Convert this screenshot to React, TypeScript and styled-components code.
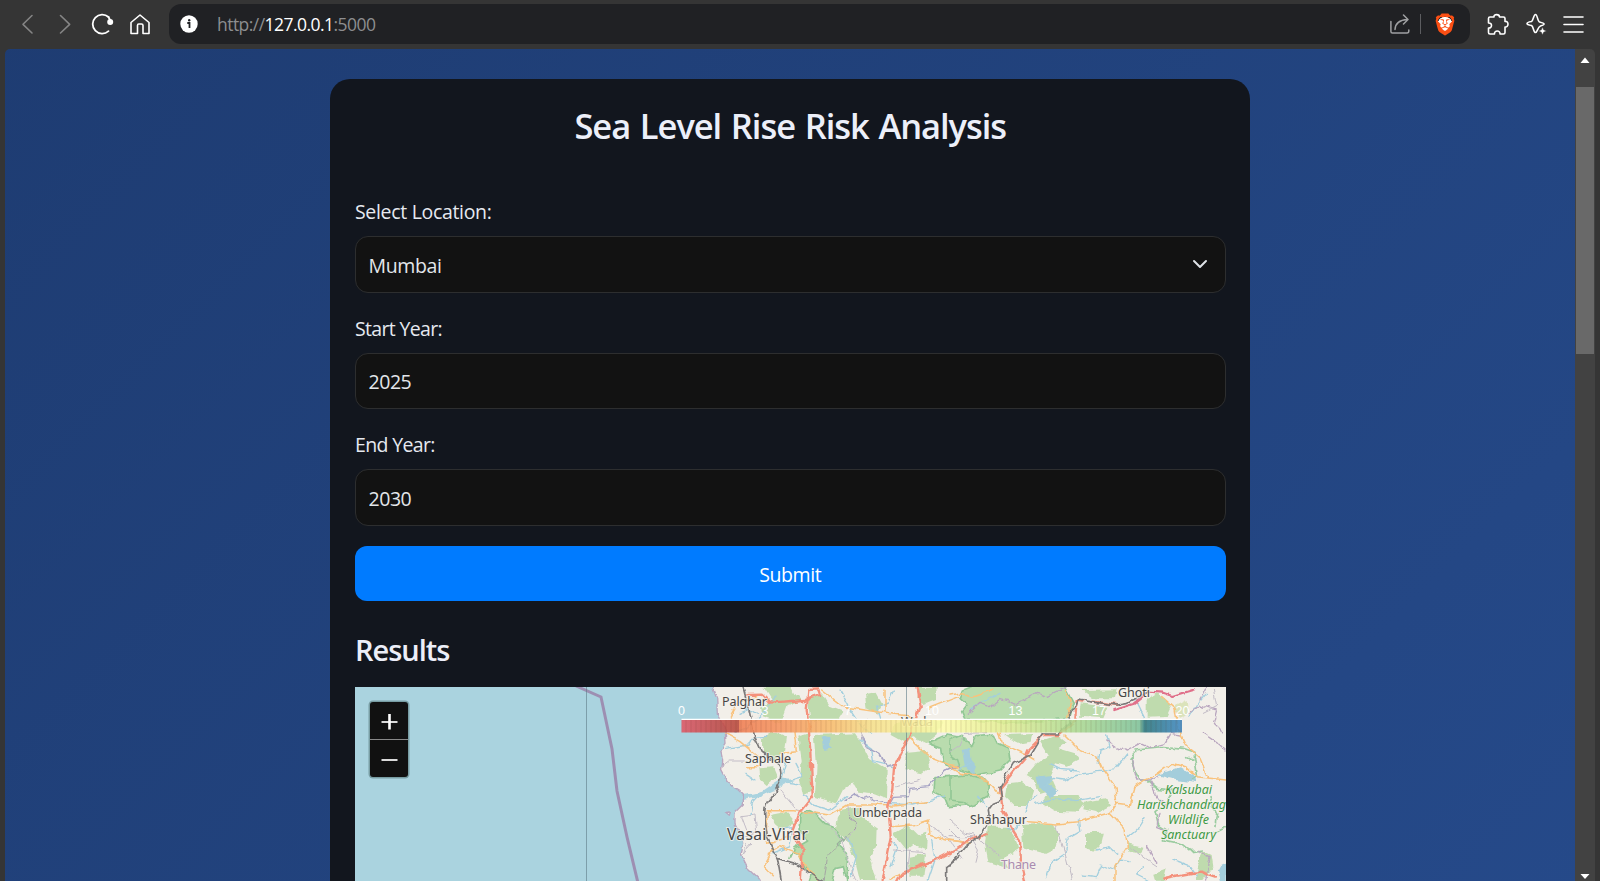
import React, { useState } from 'react';
import styled, { createGlobalStyle } from 'styled-components';
import { SiBrave } from 'react-icons/si';

const GlobalStyle = createGlobalStyle`
  *, *::before, *::after { box-sizing: border-box; }
  body {
    margin: 0;
    background: #353535;
    font-family: 'Open Sans', 'Noto Sans', sans-serif;
    color: #eceef8;
    overflow: hidden;
  }
`;

const Browser = styled.div`
  display: flex;
  flex-direction: column;
  width: 1600px;
  height: 881px;
  background: #353535;
  overflow: hidden;
`;

const Toolbar = styled.header`
  display: flex;
  align-items: center;
  flex: 0 0 49px;
  padding: 4px 15px 5px 8px;
`;

const ToolIcon = styled.svg<{ $dim?: boolean }>`
  flex: 0 0 38px;
  width: 38px;
  height: 40px;
  fill: none;
  stroke: ${(p) => (p.$dim ? '#858585' : '#fff')};
  stroke-width: 1.6;
  stroke-linecap: round;
  stroke-linejoin: round;
`;

const AddressBar = styled.div`
  display: flex;
  align-items: center;
  flex: 0 0 1301px;
  height: 40px;
  margin-left: 9px;
  margin-right: 9px;
  padding: 0 14px 0 11px;
  border-radius: 12px;
  background: #202124;
`;

const Url = styled.span`
  flex: 1;
  margin-left: 19px;
  font-size: 17.5px;
  line-height: 38px;
  letter-spacing: -0.54px;
  color: #8d8e90;
  b { font-weight: 450; color: #fff; }
`;

const BarDivider = styled.span`
  width: 1px;
  height: 20px;
  margin: 0 13px 0 10px;
  background: #5c5d60;
`;

const Shield = styled(SiBrave)`
  width: 22px;
  height: 23px;
  color: #fb4f14;
  background: radial-gradient(circle at 50% 48%, #fff 0 7px, transparent 7.5px);
`;

const Viewport = styled.div`
  display: flex;
  flex: 1;
  min-height: 0;
  margin: 0 5px;
  border-radius: 5px 5px 0 0;
  overflow: hidden;
`;

const Page = styled.main`
  display: flex;
  justify-content: center;
  align-items: flex-start;
  width: 1570px;
  padding-top: 30px;
  background: linear-gradient(135deg, #1e3c72, #2a5298) 0 -53px / 1570px 2470px;
`;

const Scrollbar = styled.div`
  display: flex;
  flex-direction: column;
  align-items: center;
  flex: 1;
  background: #424242;
`;

const Thumb = styled.div`
  width: 18px;
  height: 267px;
  margin-bottom: auto;
  background: #696969;
`;

const ScrollArrow = styled.svg<{ $h: number }>`
  width: 20px;
  height: ${(p) => p.$h}px;
  fill: #fff;
`;

const Card = styled.section`
  width: 920px;
  height: 830px;
  padding: 25px 24.5px 0 25px;
  border-radius: 20px;
  background: #12161e;
`;

const Title = styled.h1`
  margin: 0;
  height: 92px;
  font-size: 34.5px;
  font-weight: 620;
  line-height: 44px;
  letter-spacing: -1.05px;
  word-spacing: 1.8px;
  text-align: center;
  color: #eceff9;
`;

const Field = styled.div`
  display: flex;
  flex-direction: column;
  gap: 8px;
  margin-bottom: 20px;
`;

const Label = styled.label<{ $spacing?: number }>`
  height: 32px;
  font-size: 19.5px;
  font-weight: 440;
  line-height: 32px;
  letter-spacing: ${(p) => p.$spacing ?? -0.65}px;
  color: #e6e9f0;
`;

const Control = styled.div`
  display: flex;
  align-items: center;
  height: 56.5px;
  padding: 0 17px 0 12.5px;
  border: 1px solid #2d2e2f;
  border-radius: 13px;
  background: #121212;
`;

const Input = styled.input`
  flex: 1;
  padding: 2px 0 0;
  border: 0;
  outline: 0;
  background: transparent;
  font-family: inherit;
  font-size: 19.5px;
  font-weight: 440;
  letter-spacing: -0.45px;
  color: #e3e6ea;
`;

const Select = styled.select`
  flex: 1;
  padding: 2px 0 0;
  border: 0;
  outline: 0;
  appearance: none;
  background: transparent;
  font-family: inherit;
  font-size: 19.5px;
  font-weight: 440;
  letter-spacing: -0.35px;
  color: #e3e6ea;
`;

const Chevron = styled.svg`
  width: 16px;
  height: 16px;
  fill: none;
  stroke: #dee2e6;
  stroke-width: 2;
  stroke-linecap: round;
  stroke-linejoin: round;
`;

const SubmitButton = styled.button`
  display: block;
  width: 100%;
  height: 55px;
  margin: 0 0 28px;
  padding: 2px 0 0;
  border: 0;
  border-radius: 12px;
  background: #007bff;
  font-family: inherit;
  font-size: 19.5px;
  font-weight: 440;
  letter-spacing: -0.4px;
  color: #fff;
`;

const Subtitle = styled.h2`
  margin: 0 0 16.5px;
  font-size: 29px;
  font-weight: 620;
  line-height: 42px;
  letter-spacing: -1px;
  color: #eceef8;
`;

const MapFrame = styled.div`
  position: relative;
  height: 194px;
  overflow: hidden;
`;

const MapCanvas = styled.svg`
  display: block;
  width: 871px;
  height: 194px;
  font-family: 'Noto Sans', sans-serif;
`;

const ZoomControl = styled.div`
  position: absolute;
  left: 15px;
  top: 15px;
  width: 38px;
  border-radius: 3px;
  background: #111;
  box-shadow: 0 0 0 1.5px rgba(60, 90, 90, 0.45);
`;

const ZoomButton = styled.div<{ $first?: boolean }>`
  height: ${(p) => (p.$first ? 38 : 37)}px;
  border-bottom: ${(p) => (p.$first ? '1px solid #888' : '0')};
  svg { display: block; width: 38px; height: 37px; stroke: #fff; }
`;

const Road = styled.path<{ $c?: string; $w?: number }>`
  fill: none;
  stroke: ${(p) => p.$c ?? '#f9c27c'};
  stroke-width: ${(p) => p.$w ?? 4.5}px;
  stroke-linejoin: round;
  stroke-linecap: round;
`;

const Wood = styled.path`
  fill: #bfdbae;
`;

const Park = styled.path`
  fill: #b9dcae;
  stroke: #92c795;
  stroke-width: 5px;
  stroke-linejoin: round;
`;

const Place = styled.text<{ $c?: string }>`
  fill: ${(p) => p.$c ?? '#454545'};
  stroke: #f5f2ec;
  stroke-width: 2px;
  stroke-opacity: .8;
  paint-order: stroke;
  stroke-linejoin: round;
`;

const Tick = styled.text`
  fill: #fff;
  font-family: 'Liberation Sans', sans-serif;
  font-size: 12.5px;
  text-anchor: middle;
`;

const LAND = '#f2efe9';
const RED = '#f4917c';
const WATER = '#a3cfde';
const RAIL = '#7c7a7a';
const BORDER = '#b9a6bf';

function WestMap() {
  return (
    <g transform="translate(680 680) scale(.333333)">
      <path
        d="M95 15L110 55 112 100 135 150 138 190 122 213 128 240 125 272 140 300 155 318 175 330 190 345V375L165 400V430L185 470 188 490 180 520 200 560 235 593 250 615H860V15Z"
        fill={LAND}
      />
      <path d="M134 397L148 396 145 406Z" fill={LAND} />
      <Wood d="M250 20L330 18 345 45 370 60 320 75 300 130 245 112 240 80 275 60ZM385 60L425 40 450 80 490 95 475 120 390 120ZM555 45L590 38 607 70 590 100 560 85ZM720 20H770L768 60 730 75 712 50ZM640 130L710 120 790 120 770 165 740 190 700 170 680 190 635 165ZM245 180L280 155 318 170 312 215 285 240 248 215ZM355 170L388 160 392 235 400 330 370 345 360 300 365 240ZM405 165L525 160 545 190 570 240 620 270 618 355 580 340 535 335 520 310 490 330 470 370 405 350 410 250ZM235 265L280 262 292 290 260 315 238 295ZM270 405L320 395 345 425 310 450 285 430ZM480 390L535 380 545 410 590 440 588 500 570 530 590 600H540L525 540 500 480 465 450ZM640 460L685 435 715 465 742 458 738 510 700 495 680 510ZM690 530L738 520 730 590H685ZM680 215L740 210 750 260 725 280 670 270Z" />
      <path d="M425 170L448 175 452 205 430 210ZM800 228L825 220 830 245 805 250Z" fill="#a3cddb" />
      <Park d="M362 425C360 390 385 385 400 398L432 430 465 440 490 480 475 495 502 520V610L490 560 465 565 455 610H385L395 580 370 560 360 525 340 515 330 535 345 500 380 480 360 455Z" />
      <Park d="M860 175L800 165 745 190 785 205 790 245 810 262 860 262M860 285L800 290 765 290 762 340 795 355 805 380 860 375" />
      <Road $c={WATER} $w={4} d="M165 155C190 165 240 110 260 90L285 45M140 205L205 195 215 175 260 172M195 352L240 348 310 308 362 315M195 352L300 320 320 250M210 405L218 365 232 350M345 250L365 290 310 308M225 300L195 280M370 345L400 375 450 390 500 350M540 180L575 205 580 245 640 260M640 30L625 65 590 82 600 120M480 30L510 85 540 130 575 160M620 370L700 375 740 365 790 350M500 470L530 530 512 590M755 480L765 540 745 600M300 445L338 440 330 500 280 520M630 560L650 500 630 480M180 100L205 88 230 105" />
      <path d="M190 345L240 338 305 295 345 302 310 318 235 352 190 360Z" fill="#aad3df" />
      <Road $c={BORDER} $w={4} d="M95 15L110 55 112 100 135 150 138 190 122 213 128 240 125 272 140 300 155 318 175 330 190 345V375L165 400V430L185 470 188 490 180 520 200 560 235 593 250 615M134 397L148 396 145 406Z" />
      <Road $c="#a6a3c4" $w={4} d="M495 362L525 340 550 355 570 350 580 362 630 370 640 352 685 350 690 325 745 320 790 270 850 255M545 175L560 200 600 220 620 260 650 250" />
      <Road $c="#c3bdc7" $w={3} d="M130 255L150 240 190 240M190 470L230 455 225 405 185 410 200 450M200 490L190 520M215 490L185 525M500 375L505 410 535 430 500 480M560 120L545 180M300 330L350 390 420 405 480 470 530 610M640 510L735 518M650 320L720 300M690 510L682 580M740 430L810 480 850 540" />
      <Road $c="#a3a3a3" $w={3} d="M505 410L535 430 470 500 440 530 430 600" strokeDasharray="12 5" />
      <Road d="M150 110L172 70 230 50M135 160L180 185 235 230M200 260H232M262 392L340 392 450 405 500 375 580 375 640 378 740 365M345 160L352 215 300 220M425 30L490 80 620 100 710 110M615 30V100M690 175L750 230 850 270M632 440L700 435 745 420 750 465 800 480 850 485M745 85L835 50M262 392L258 480M280 500L258 540 250 560 280 590M260 490L330 470M265 520L300 500 355 520 380 565 430 610M630 600L665 580" />
      <Road $c={RED} $w={7} d="M205 45L245 44 270 68 375 60 420 45 415 28 385 30 380 90 388 165 392 235 398 345 362 390 340 450 368 510 362 610M712 18L722 80 690 165 645 260 640 330 625 380 632 470 605 600M840 500L775 535 665 580 650 610" />
      <Road $c={RAIL} $w={5} d="M188 18L205 80 225 175 240 210 300 255C315 290 300 320 270 355 245 380 255 420 262 470L292 535 305 610M292 535L345 550 430 605M840 530L800 560V610" />
    </g>
  );
}

function EastMap() {
  return (
    <g transform="translate(950 680) scale(.333333)">
      <Park d="M80 15L40 30 30 55 50 75 35 95 45 118 180 130 355 115 370 70 340 15Z" />
      <Wood d="M395 30L500 28 495 55 430 55ZM590 60L620 40 665 75 650 108 590 110ZM395 70L475 80 460 115 390 110ZM160 165L250 162 245 185 205 192 180 180ZM270 185L325 165 350 185 325 205 375 220 390 240 350 260 315 250 300 285 320 330 270 345 255 300 230 285 260 250 295 225ZM170 310L215 305 250 330 235 375 190 375 165 350ZM290 345L375 345 405 370 385 395 310 392 275 370ZM405 365L465 355 480 380 445 398 400 388ZM215 435L310 430 330 460 320 500 280 520 220 505ZM110 440L175 440 195 470 205 510 160 535 175 565 115 545 105 490ZM405 460L462 458 455 490 430 515 405 505ZM530 490L580 500 575 518 535 512ZM610 580L650 565 640 605H615ZM755 510L785 525 790 560 760 600H735Z" />
      <path d="M670 80L710 60 715 100 690 110Z" fill="#dbe3bb" />
      <Park d="M0 180L35 165 65 200 80 170 130 165 142 190 175 205 180 240 150 270 80 285 30 270 20 240 0 225ZM0 290L50 285 100 295 118 315 115 350 60 380 40 365 0 360Z" />
      <path d="M35 210L60 205 65 240 78 255 70 285 45 260ZM260 290L305 285 295 310 325 335 300 355 268 320ZM620 285L690 262 735 290 740 310 680 300ZM800 565L830 550V605H810Z" fill="#a3cddb" />
      <Road $c="#9bcca0" $w={5} d="M555 210L640 203 700 208 735 220 730 240 710 230M540 235L560 215M545 240L552 270 570 300 590 300 620 325 670 330 650 370 615 395 625 435 650 450 640 480 690 490 720 515 760 510M730 230L740 290 725 300M780 350L800 400 795 440M790 460L828 440" />
      <Road $c={WATER} $w={4} d="M60 90L110 60 150 40M280 320L310 295 345 300 370 285 445 275 495 270 530 225M470 165L480 200 450 210 445 250M260 370L310 355 380 362 450 350M300 250L330 265 390 270M385 420L390 455 355 475 345 520 305 545 290 590M540 545L510 540 490 570 455 555 440 590 400 585M585 410L560 450 530 475M555 60L580 110M590 600L560 585 580 560M20 270L60 250M225 400L235 365 260 345M770 40L740 75 720 110M665 540L720 560 740 590M440 510L480 500 500 520M215 420L190 450 170 445M85 350L110 380" />
      <Road $c={BORDER} $w={4} strokeDasharray="14 5" d="M55 100L90 70 120 80 150 55 200 70 260 40 290 50 350 20M470 180L500 200 530 210 570 190 600 205 640 195 660 160 690 165M720 100L750 75 800 90 790 130 820 160M770 20L750 60M545 235L560 300 600 300 620 350 650 375M630 400L620 440 650 450M760 160L810 195 825 210M590 500L620 550M600 300L625 290M740 510L780 530 770 600" />
      <Road $c="#c1bbc5" $w={3} d="M0 420L45 460 75 465 150 530M0 470L70 470M320 435L345 520 365 600M60 470L85 510 75 550M0 450L30 480M540 500L590 540 620 560M0 215L30 195 45 160 110 158M790 30L800 80 760 100" />
      <Road d="M0 45L40 38 70 48 130 28M145 155L155 190 220 220 255 240M345 165L385 205 440 230 455 265 495 320 500 370 480 400 385 425 320 432 235 425M345 30L360 60 350 115M500 370L540 375 555 320 585 300 625 280 665 250 710 262 740 290 828 300M480 400L525 450 532 500 495 560V605M635 50L675 85 685 150 705 195 750 235 775 295M0 260L35 280 80 285 130 320 155 350M0 480L60 490" />
      <Road $c={RED} $w={7} d="M0 520L55 480 110 460M400 65L380 62 375 125 325 165 280 165 235 210 225 235 195 270 150 325 158 395 190 450 210 480 213 550 225 605M430 65L500 75M640 595L690 585 750 575 795 590" />
      <Road $c="#e0708a" $w={7} d="M490 90L550 72 595 35 640 38 670 48 735 28" />
      <Road $c={RAIL} $w={5} d="M595 35L530 70 500 75 385 60 375 85 355 100 360 130 325 162 278 162 240 225 190 250 150 320 155 360 130 370 115 390 120 420 85 470 45 500 0 555" />
    </g>
  );
}

const ticks: [number, string][] = [
  [681.5, '0'], [765, '3'], [848, '7'], [932, '10'], [1015.5, '13'], [1099, '17'], [1182.5, '20'],
];

function RiskMap() {
  return (
    <MapCanvas viewBox="355 687 871 194">
      <defs>
        <linearGradient id="scale" x1="0" x2="1" y1="0" y2="0">
          <stop offset="0" stopColor="#e25563" />
          <stop offset=".115" stopColor="#b54335" />
          <stop offset=".116" stopColor="#f07a4e" />
          <stop offset=".2" stopColor="#f6935b" />
          <stop offset=".3" stopColor="#f8bb6a" />
          <stop offset=".38" stopColor="#f6df88" />
          <stop offset=".52" stopColor="#fffdab" />
          <stop offset=".64" stopColor="#e3ef94" />
          <stop offset=".78" stopColor="#aedb90" />
          <stop offset=".915" stopColor="#7cc198" />
          <stop offset=".925" stopColor="#25737b" />
          <stop offset="1" stopColor="#3b86c2" />
        </linearGradient>
        <pattern id="bands" width="5" height="14" patternUnits="userSpaceOnUse">
          <rect width="2" height="14" fill="#55301c" opacity=".07" />
        </pattern>
        <filter id="terrain" filterUnits="userSpaceOnUse" x="340" y="670" width="900" height="225" colorInterpolationFilters="sRGB">
          <feTurbulence type="fractalNoise" baseFrequency=".09" numOctaves="3" seed="4" />
          <feDisplacementMap in="SourceGraphic" scale="6" xChannelSelector="R" yChannelSelector="G" />
        </filter>
      </defs>
      <rect x="355" y="687" width="871" height="194" fill="#aad3df" />
      <g filter="url(#terrain)">
        <rect x="930" y="675" width="310" height="220" fill={LAND} />
        <WestMap />
        <EastMap />
      </g>
      <path d="M576 686L601 697 612 749 617 791 627 837 638 883" fill="none" stroke="#9d8fb2" strokeWidth="3" />
      <path d="M586.5 687V881M906.5 687V881" stroke="#5f7c88" strokeWidth="1" opacity=".6" />
      <Place x="722" y="706" fontSize="12.5" textLength="45">Palghar</Place>
      <Place x="745" y="763" fontSize="12.5" textLength="46">Saphale</Place>
      <Place x="727" y="840" fontSize="15.5" textLength="81">Vasai-Virar</Place>
      <Place x="853" y="817" fontSize="12.5" textLength="69">Umberpada</Place>
      <Place x="970" y="824" fontSize="12.5" textLength="57">Shahapur</Place>
      <Place x="1118" y="696.5" fontSize="12.5" textLength="32">Ghoti</Place>
      <Place x="901" y="726" fontSize="12.5" textLength="32">Wada</Place>
      <Place x="1001" y="869" fontSize="12.5" textLength="35" $c="#a98bb0">Thane</Place>
      <g fontStyle="italic" fontSize="12.5">
        <Place x="1165" y="794" textLength="47" $c="#3f9a46">Kalsubai</Place>
        <Place x="1137" y="809" textLength="89" $c="#3f9a46">Harishchandrag</Place>
        <Place x="1168" y="824" textLength="41" $c="#3f9a46">Wildlife</Place>
        <Place x="1161" y="839" textLength="55" $c="#3f9a46">Sanctuary</Place>
      </g>
      <rect x="681.5" y="720" width="500.5" height="12.5" fill="url(#scale)" opacity=".86" />
      <rect x="681.5" y="720" width="500.5" height="12.5" fill="url(#bands)" />
      <path d="M681.5 719.3H1182" stroke="#fff" strokeWidth="1.3" />
      {ticks.map(([x, t]) => <Tick key={t} x={x} y="715">{t}</Tick>)}
    </MapCanvas>
  );
}

export default function App() {
  const [start, setStart] = useState('2025');
  const [end, setEnd] = useState('2030');
  return (
    <>
      <GlobalStyle />
      <Browser>
        <Toolbar>
          <ToolIcon $dim viewBox="8 4 38 40"><path d="M32 15.5L23 24.3 32 33" /></ToolIcon>
          <ToolIcon $dim viewBox="46 4 38 40"><path d="M60.5 15.5L69.7 24.3 60.5 33" /></ToolIcon>
          <ToolIcon viewBox="84 4 38 40">
            <path d="M108.5 17A9.5 9.5 0 1 0 108.5 31.2" strokeWidth="1.8" />
            <path d="M108.5 17L110 20" strokeWidth="1.8" />
            <circle cx="110.2" cy="22" r="2.2" fill="#fff" />
          </ToolIcon>
          <ToolIcon viewBox="122 4 38 40">
            <path d="M131 22.5L140 15 149 22.5V33.5H143V25.5Q143 24 141.5 24H138.7Q137.5 24 137.5 25.5V33.5H131Z" />
          </ToolIcon>
          <AddressBar>
            <svg width="18" height="18" viewBox="0 0 18 18">
              <circle cx="9" cy="9" r="8.7" fill="#fff" />
              <path d="M7.3 8H9.5V13" stroke="#202124" strokeWidth="1.8" fill="none" />
              <circle cx="9.2" cy="5.2" r="1.2" fill="#202124" />
            </svg>
            <Url>http://<b>127.0.0.1</b>:5000</Url>
            <svg width="20" height="20" viewBox="0 0 20 20" fill="none" stroke="#9fa0a2" strokeWidth="1.5" strokeLinecap="round" strokeLinejoin="round">
              <path d="M.9 7.5V17.5Q.9 19 2.4 19H17Q18.8 19 18.8 17V16M5 15.5C5.3 9.5 9 6 17.5 5.5M13.5 1L18 5.5 13.5 10" />
            </svg>
            <BarDivider />
            <Shield />
          </AddressBar>
          <ToolIcon viewBox="1479 4 38 40">
            <path d="M1488.5 18.5Q1488.5 17 1490 17H1494C1493.5 13.8 1499.5 13.8 1499.5 17H1503.5Q1505 17 1505 18.5V21.5C1509 20.5 1509 27.5 1505 27V32.5Q1505 34 1503.5 34H1500C1500.5 30 1494 30 1494.5 34H1490Q1488.5 34 1488.5 32.5V28C1492.5 28.5 1492.5 22.5 1488.5 23Z" />
          </ToolIcon>
          <ToolIcon viewBox="1517 4 38 40">
            <path d="M1535.5 14.5C1537.5 14.5 1537.5 21.5 1539.5 22 1545.5 23.5 1545.5 24.5 1540.5 26 1537.5 27 1537.5 32.5 1535.5 32.5 1533.5 32.5 1533.5 26.5 1531.5 25.5 1525.5 24.5 1525.5 22.5 1531.5 21.5 1533.5 20.5 1533.5 14.5 1535.5 14.5Z" />
            <path d="M1542.5 27L1543.7 29.8 1546.5 31 1543.7 32.2 1542.5 35 1541.3 32.2 1538.5 31 1541.3 29.8Z" fill="#fff" stroke="#353535" strokeWidth=".5" />
          </ToolIcon>
          <ToolIcon viewBox="1555 4 38 40"><path d="M1564 17H1583M1564 24.5H1583M1564 32H1583" /></ToolIcon>
        </Toolbar>
        <Viewport>
          <Page>
            <Card>
              <Title>Sea Level Rise Risk Analysis</Title>
              <Field>
                <Label htmlFor="location" $spacing={-0.32}>Select Location:</Label>
                <Control>
                  <Select id="location" defaultValue="Mumbai"><option>Mumbai</option></Select>
                  <Chevron viewBox="0 0 16 16"><path d="M2 5l6 6 6-6" /></Chevron>
                </Control>
              </Field>
              <Field>
                <Label htmlFor="start">Start Year:</Label>
                <Control><Input id="start" value={start} onChange={(e) => setStart(e.target.value)} /></Control>
              </Field>
              <Field>
                <Label htmlFor="end">End Year:</Label>
                <Control><Input id="end" value={end} onChange={(e) => setEnd(e.target.value)} /></Control>
              </Field>
              <SubmitButton>Submit</SubmitButton>
              <Subtitle>Results</Subtitle>
              <MapFrame>
                <RiskMap />
                <ZoomControl>
                  <ZoomButton $first>
                    <svg viewBox="0 0 38 37"><path d="M11.5 20H27.5" strokeWidth="1.7" /><path d="M19.5 12V27.5" strokeWidth="2.6" /></svg>
                  </ZoomButton>
                  <ZoomButton><svg viewBox="0 0 38 37"><path d="M11.5 20H27.5" strokeWidth="1.7" /></svg></ZoomButton>
                </ZoomControl>
              </MapFrame>
            </Card>
          </Page>
          <Scrollbar>
            <ScrollArrow $h={38} viewBox="0 0 20 38"><path d="M5.5 14L10 8.5 14.5 14Z" /></ScrollArrow>
            <Thumb />
            <ScrollArrow $h={20} viewBox="0 0 20 20"><path d="M5.5 13L10 18 14.5 13Z" /></ScrollArrow>
          </Scrollbar>
        </Viewport>
      </Browser>
    </>
  );
}
